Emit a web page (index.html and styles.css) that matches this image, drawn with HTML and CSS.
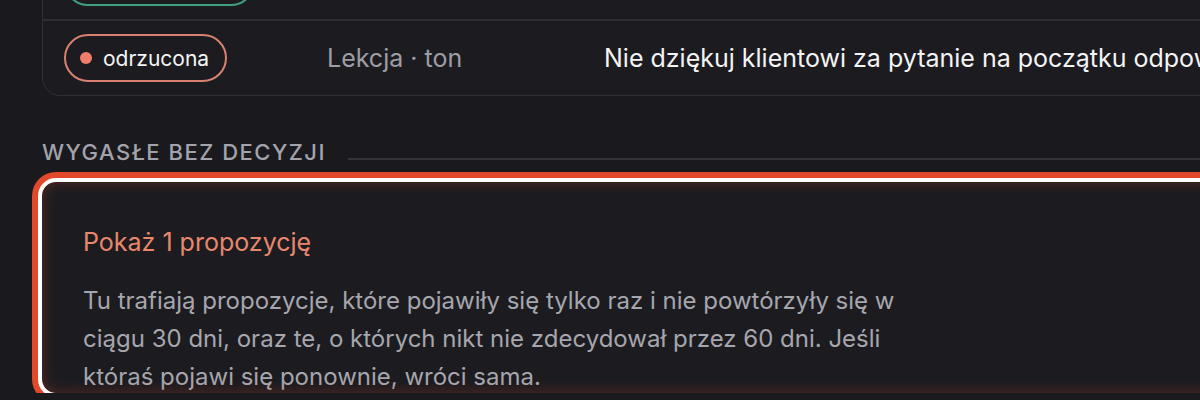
FILE: index.html
```html
<!DOCTYPE html>
<html lang="pl">
<head>
    <meta charset="UTF-8">
    <meta name="viewport" content="width=device-width, initial-scale=1.0">
    <title>Propozycje</title>
    <link rel="stylesheet" href="styles.css">
</head>
<body>
    <main class="page">
        <div class="list">
            <div class="row">
                <span class="pill pill-ok"><span class="dot"></span>zatwierdzona</span>
                <span class="kind">Lekcja · styl</span>
                <span class="text">Podawaj termin realizacji zamówienia w pierwszym zdaniu</span>
            </div>
            <div class="row">
                <span class="pill pill-no"><span class="dot"></span>odrzucona</span>
                <span class="kind">Lekcja · ton</span>
                <span class="text">Nie dziękuj klientowi za pytanie na początku odpowiedzi</span>
            </div>
        </div>

        <div class="section-head">
            <h2>Wygasłe bez decyzji</h2>
            <span class="rule"></span>
        </div>

        <div class="expired">
            <div class="toggle">Pokaż 1 propozycję</div>
            <p class="note">Tu trafiają propozycje, które pojawiły się tylko raz i nie powtórzyły się w ciągu 30 dni, oraz te, o których nikt nie zdecydował przez 60 dni. Jeśli któraś pojawi się ponownie, wróci sama.</p>
        </div>
    </main>
</body>
</html>
```

FILE: styles.css
```css
body {
    margin: 0;
    background-color: #1a1a1e;
    font-family: Inter, "Noto Sans", sans-serif;
    color: #f2f2f4;
    overflow: hidden;
}
.page {
    width: 1400px;
    padding-left: 42px;
}
.list {
    margin-top: -56px;
    border: 1px solid #2f2f34;
    border-radius: 18px;
    background-color: #1c1c20;
}
.row {
    display: grid;
    grid-template-columns: 263px 277px 1fr;
    align-items: center;
    padding: 13px 0 13px 21px;
    font-size: 25px;
}
.row + .row {
    border-top: 2px solid #2d2d32;
}
.pill {
    display: inline-flex;
    align-items: center;
    gap: 11px;
    justify-self: start;
    box-sizing: border-box;
    height: 48px;
    padding: 0 16px 0 14px;
    border: 2px solid;
    border-radius: 24px;
    font-size: 21px;
    color: #f4f4f6;
}
.pill .dot {
    width: 12px;
    height: 12px;
    border-radius: 50%;
}
.pill-ok {
    border-color: #3f9f7e;
}
.pill-ok .dot {
    background-color: #4fbf95;
}
.pill-no {
    border-color: #d98171;
}
.pill-no .dot {
    background-color: #f07e6c;
}
.kind {
    color: #9d9da6;
}
.text {
    white-space: nowrap;
    color: #f4f4f6;
}
.section-head {
    display: flex;
    align-items: flex-end;
    gap: 22px;
    margin-top: 42px;
}
.section-head h2 {
    margin: 0;
    font-size: 22px;
    font-weight: 500;
    letter-spacing: 1.5px;
    text-transform: uppercase;
    line-height: 28px;
    color: #a3a3ab;
}
.rule {
    flex: 1;
    height: 2px;
    margin-bottom: 6px;
    background-color: #333338;
}
.expired {
    position: relative;
    height: 211px;
    margin-top: 16px;
    box-sizing: border-box;
    padding: 43px 0 0 41px;
    border-radius: 14px;
    background-color: #1c1c20;
    overflow: hidden;
    outline: 4px solid #fff;
    box-shadow: 0 0 0 10px #e2492a;
}
.expired::after {
    content: "";
    position: absolute;
    inset: 0;
    border-radius: 14px;
    box-shadow: inset 0 0 14px rgba(226, 73, 42, 0.3);
    pointer-events: none;
}
.toggle {
    font-size: 25px;
    line-height: 34px;
    color: #e8876b;
}
.note {
    max-width: 840px;
    margin: 23px 0 0;
    font-size: 24px;
    line-height: 38px;
    color: #a6a6ae;
}
```
